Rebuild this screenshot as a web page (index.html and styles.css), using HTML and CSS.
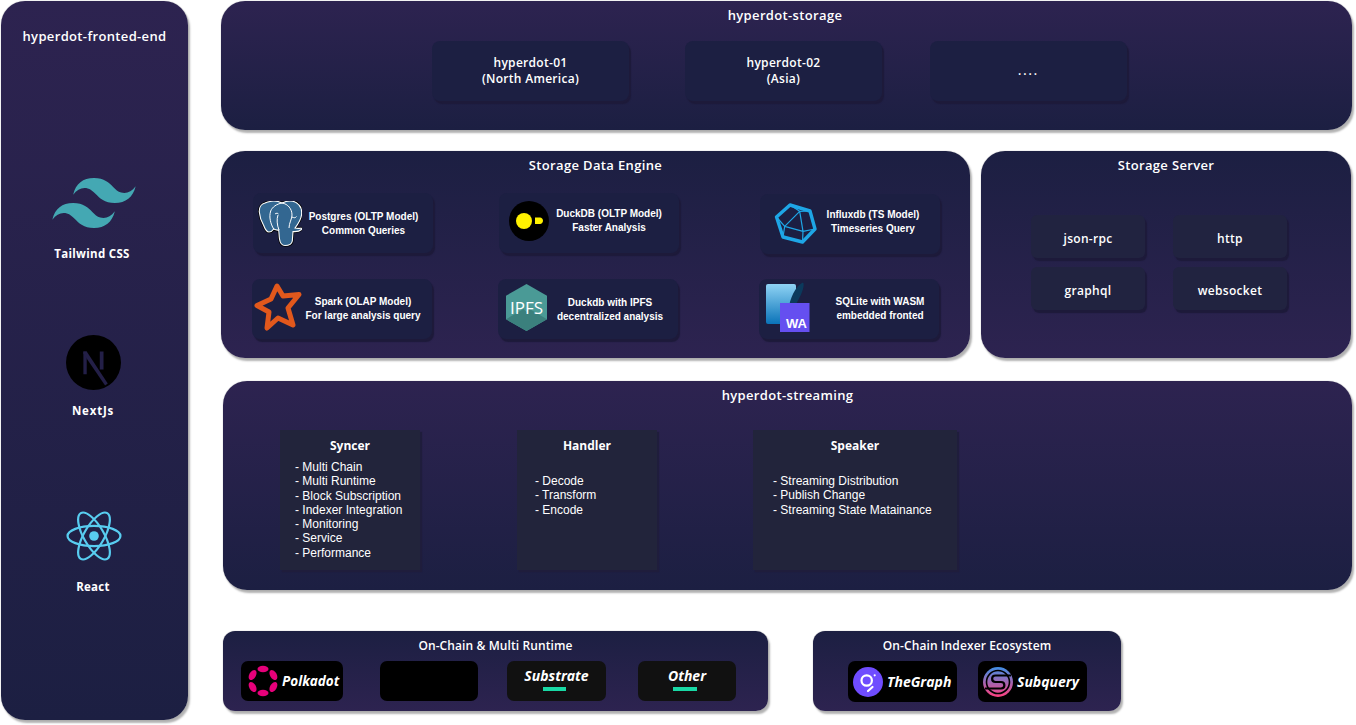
FILE: index.html
```html
<!DOCTYPE html>
<html lang="en">
<head>
<meta charset="utf-8">
<title>hyperdot architecture</title>
<link rel="stylesheet" href="styles.css">
</head>
<body>
<div class="page">
  <aside class="panel sidebar grad-down">
    <h2 class="title side-title">hyperdot-fronted-end</h2>
    <svg class="logo-tailwind" viewBox="0 4.8 24 14.4"><path fill="#44a8b3" d="M12.001 4.8c-3.2 0-5.2 1.6-6 4.8 1.2-1.6 2.6-2.2 4.2-1.8.913.228 1.565.89 2.288 1.624C13.666 10.618 15.027 12 18.001 12c3.2 0 5.2-1.6 6-4.8-1.2 1.6-2.6 2.2-4.2 1.8-.913-.228-1.565-.89-2.288-1.624C16.337 6.182 14.976 4.8 12.001 4.8zm-6 7.2c-3.2 0-5.2 1.6-6 4.8 1.2-1.6 2.6-2.2 4.2-1.8.913.228 1.565.89 2.288 1.624 1.177 1.194 2.538 2.576 5.512 2.576 3.2 0 5.2-1.6 6-4.8-1.2 1.6-2.6 2.2-4.2 1.8-.913-.228-1.565-.89-2.288-1.624C10.337 13.382 8.976 12 6.001 12z"/></svg>
    <div class="side-label label-tailwind">Tailwind CSS</div>
    <svg class="logo-next" viewBox="0 0 56 56"><circle cx="28" cy="28" r="28" fill="#000"/><path fill="#231f47" d="M17.700 16.700h3.400V40h-3.400zM34.400 16.700h3.800V35h-3.800z"/><path fill="#231f47" d="M17.700 16.700h3.400l21.400 32.800-2.700 2L17.700 19z"/></svg>
    <div class="side-label label-next">NextJs</div>
    <svg class="logo-react" viewBox="-29 -26 58 52"><g fill="none" stroke="#58cdf0" stroke-width="2.300"><ellipse rx="27.500" ry="10.500"/><ellipse rx="27.500" ry="10.500" transform="rotate(60)"/><ellipse rx="27.500" ry="10.500" transform="rotate(120)"/></g><circle r="5" fill="#58cdf0"/></svg>
    <div class="side-label label-react">React</div>
  </aside>

  <main class="main">
    <section class="panel storage grad-down">
      <h2 class="title storage-title">hyperdot-storage</h2>
      <div class="storage-grid">
        <div class="card node">hyperdot-01<br>(North America)</div>
        <div class="card node">hyperdot-02<br>(Asia)</div>
        <div class="card node node-more">....</div>
      </div>
    </section>

    <div class="middle">
      <section class="panel engine grad-up">
        <h2 class="title">Storage Data Engine</h2>
        <div class="engine-grid">
          <div class="card eng pg">
            <svg class="ico ico-pg" viewBox="0 0 44 46"><path fill="#336791" stroke="#000" stroke-width="2.600" d="M7 2C3 3 1 7 1.300 11c.4 5 2.400 10 4.400 13.500 1.500 4 3.500 6.500 5.300 6.500 2 0 3.700-1.500 4.700-3 1.500.8 3.300 1.300 5 1 .4 3 .3 6 .8 9 .6 4 2.500 6.500 5.500 6.500 4 0 6.800-1.500 7.300-4.500l.7-9.500c3 .3 6 .2 8.500-2 .8-.8.200-1.500-1-1.300-2 .3-4 .2-5.500-.2 3-4 6-8.500 6.500-13 .5-4.500-.5-8-2.500-10C39 1.500 36 0 32 0c-3 0-5.500.8-8 2-2.500-1.300-5.500-2-8.300-2C13 0 10 1 7 2z"/><path fill="#336791" stroke="#fff" stroke-width="1.100" d="M7 2C3 3 1 7 1.300 11c.4 5 2.400 10 4.400 13.500 1.500 4 3.500 6.500 5.300 6.500 2 0 3.700-1.500 4.700-3 1.500.8 3.300 1.300 5 1 .4 3 .3 6 .8 9 .6 4 2.500 6.500 5.500 6.500 4 0 6.800-1.500 7.300-4.500l.7-9.500c3 .3 6 .2 8.500-2 .8-.8.200-1.500-1-1.300-2 .3-4 .2-5.500-.2 3-4 6-8.500 6.500-13 .5-4.500-.5-8-2.500-10C39 1.500 36 0 32 0c-3 0-5.500.8-8 2-2.500-1.300-5.500-2-8.300-2C13 0 10 1 7 2z"/><path fill="none" stroke="#fff" stroke-width="1" d="M24 2c6 1 10 6 10 12 0 4-3 8-3 13M15.700 28c-3-5-5-12-3-18 1.500-4 6-7 11.300-8M21 29c-2-5-2.500-11-1-15M34 16c2 1 3.500 1 4.500-.5M17 13c1-1 3-1 3.500 0"/></svg>
            <div class="eng-text">Postgres (OLTP Model)<br>Common Queries</div>
          </div>
          <div class="card eng duck">
            <svg class="ico ico-duck" viewBox="0 0 40 40"><circle cx="20" cy="20" r="20" fill="#000"/><circle cx="15" cy="20" r="8" fill="#fff100"/><path fill="#fff100" d="M26 16.500h5c1.600 0 3 1.500 3 3.200s-1.400 3.300-3 3.300h-5z"/></svg>
            <div class="eng-text">DuckDB (OLTP Model)<br>Faster Analysis</div>
          </div>
          <div class="card eng influx">
            <svg class="ico ico-influx" viewBox="0 0 44 44"><g fill="none" stroke="#1ea6e6" stroke-linejoin="round"><path stroke-width="3.400" d="M17 3 37 9l5 18-12.500 13L10 35 3.500 15z"/><path stroke-width="1.200" d="M17 3l9.700 6.300L37 9M26.700 9.300 30 29.300M26.700 9.300 11.700 24.300M30 29.300 42 27M30 29.300 29.500 40M30 29.300 11.700 24.300 3.500 15M11.700 24.300 10 35"/></g></svg>
            <div class="eng-text">Influxdb (TS Model)<br>Timeseries Query</div>
          </div>
          <div class="card eng spark">
            <svg class="ico ico-spark" viewBox="0 0 48 50"><path fill="none" stroke="#e2581c" stroke-width="5" stroke-linejoin="round" d="M23 4 29 14 45 12.500 34 26 39 43 24 36 13 46 15 30 3 23.500 17 17z"/></svg>
            <div class="eng-text">Spark (OLAP Model)<br>For large analysis query</div>
          </div>
          <div class="card eng ipfs">
            <svg class="ico ico-ipfs" viewBox="0 0 41 47"><path fill="#4a9a96" d="M20.500 0 41 11.700v23.600L20.500 47 0 35.300V11.700z"/><path fill="#3b807d" d="M0 35.300 20.500 47V28l-3-3zM41 35.300 20.500 47V28l3-3z"/><text class="ipfs-text" x="20.500" y="29.500" text-anchor="middle">IPFS</text></svg>
            <div class="eng-text">Duckdb with IPFS<br>decentralized analysis</div>
          </div>
          <div class="card eng sqlite">
            <svg class="ico ico-sqlite" viewBox="0 0 45 51"><defs><linearGradient id="sq" x1="0" y1="0" x2="0" y2="1"><stop offset="0" stop-color="#8fd3f4"/><stop offset="1" stop-color="#0a73b8"/></linearGradient></defs><rect x="1" y="3" width="30" height="40" rx="2" fill="url(#sq)"/><path fill="#0b3a5c" d="M24 26c1-8 6-20 13-24 2-1 2 2 1 6-2 7-6 13-12 24l-2 1z"/><rect x="15" y="22" width="29.500" height="29" fill="#654ff0"/><text class="wa-text" x="31.500" y="46.500" text-anchor="middle">WA</text></svg>
            <div class="eng-text">SQLite with WASM<br>embedded fronted</div>
          </div>
        </div>
      </section>

      <section class="panel server grad-up">
        <h2 class="title">Storage Server</h2>
        <div class="server-grid">
          <div class="card rpc">json-rpc</div>
          <div class="card rpc">http</div>
          <div class="card rpc">graphql</div>
          <div class="card rpc">websocket</div>
        </div>
      </section>
    </div>

    <section class="panel streaming grad-down">
      <h2 class="title">hyperdot-streaming</h2>
      <div class="stream-row">
        <div class="block syncer">
          <h3 class="block-title">Syncer</h3>
          <ul class="list list-syncer">
            <li>- Multi Chain</li><li>- Multi Runtime</li><li>- Block Subscription</li><li>- Indexer Integration</li><li>- Monitoring</li><li>- Service</li><li>- Performance</li>
          </ul>
        </div>
        <div class="block handler">
          <h3 class="block-title">Handler</h3>
          <ul class="list list-handler">
            <li>- Decode</li><li>- Transform</li><li>- Encode</li>
          </ul>
        </div>
        <div class="block speaker">
          <h3 class="block-title">Speaker</h3>
          <ul class="list list-speaker">
            <li>- Streaming Distribution</li><li>- Publish Change</li><li>- Streaming State Matainance</li>
          </ul>
        </div>
      </div>
    </section>

    <div class="bottom">
      <section class="panel chain grad-up">
        <h2 class="title small">On-Chain &amp; Multi Runtime</h2>
        <div class="chain-row">
          <div class="tile tile-polkadot">
            <svg class="tile-ico dot-ico" viewBox="0 0 30 32"><g fill="#e6007a"><ellipse cx="15" cy="4" rx="5.500" ry="3.300"/><ellipse cx="15" cy="28" rx="5.500" ry="3.300"/><ellipse cx="4.600" cy="10" rx="5.500" ry="3.300" transform="rotate(-60 4.600 10)"/><ellipse cx="25.400" cy="10" rx="5.500" ry="3.300" transform="rotate(60 25.400 10)"/><ellipse cx="4.600" cy="22" rx="5.500" ry="3.300" transform="rotate(60 4.600 22)"/><ellipse cx="25.400" cy="22" rx="5.500" ry="3.300" transform="rotate(-60 25.400 22)"/></g></svg>
            <span class="tile-name">Polkadot</span>
          </div>
          <div class="tile tile-blank"></div>
          <div class="tile tile-stack tile-substrate"><span class="tile-name">Substrate</span><span class="bar bar-substrate"></span></div>
          <div class="tile tile-stack tile-other"><span class="tile-name">Other</span><span class="bar bar-other"></span></div>
        </div>
      </section>
      <section class="panel indexer grad-up">
        <h2 class="title small">On-Chain Indexer Ecosystem</h2>
        <div class="indexer-row">
          <div class="tile tile-index">
            <svg class="tile-ico idx-ico" viewBox="0 0 30 30"><circle cx="15" cy="15" r="15" fill="#6f4cff"/><circle cx="13.700" cy="13.500" r="5.200" fill="none" stroke="#fff" stroke-width="2.200"/><path stroke="#fff" stroke-width="2.200" stroke-linecap="round" d="M15 24l4.500-4"/><circle cx="21.700" cy="8.300" r="1.100" fill="#fff"/></svg>
            <span class="tile-name">TheGraph</span>
          </div>
          <div class="tile tile-index">
            <svg class="tile-ico idx-ico" viewBox="0 0 30 30"><defs><linearGradient id="sub" x1="0" y1="0" x2="0" y2="1"><stop offset="0" stop-color="#3f8fe6"/><stop offset="1" stop-color="#ff3f7f"/></linearGradient></defs><circle cx="15" cy="15" r="15" fill="url(#sub)"/><circle cx="15" cy="15" r="11.500" fill="none" stroke="#000" stroke-width="1.600"/><path fill="none" stroke="#000" stroke-width="2.200" d="M28 8.500H12.500c-4.500 0-4.500 6.500 0 6.500h5.500c4.500 0 4.500 6.500 0 6.500H2"/></svg>
            <span class="tile-name">Subquery</span>
          </div>
        </div>
      </section>
    </div>
  </main>
</div>
</body>
</html>
```

FILE: styles.css
```css
* { box-sizing: border-box; }
html, body { margin: 0; padding: 0; background: #fff; }
body { width: 1356px; height: 725px; overflow: hidden; font-family: "Open Sans", "Noto Sans", sans-serif; color: #fff; }
h2, h3, ul { margin: 0; padding: 0; }
ul { list-style: none; }

.page { display: flex; align-items: flex-start; padding: 1px 0 0 1px; gap: 33px; }
.main { display: flex; flex-direction: column; width: 1131px; }

.panel { border-radius: 24px; box-shadow: 0 0 1px #888, 2px 3px 2px rgba(0,0,0,.3); }
.grad-down { background: linear-gradient(180deg, #2d2350, #1c1f42); }
.grad-up { background: linear-gradient(180deg, #1c1f42, #2d2350); }

.title { font-size: 13px; font-weight: 600; line-height: 18px; text-align: center; letter-spacing: .35px; }
.title.small { font-size: 12px; line-height: 16px; letter-spacing: .1px; }
.storage-title { padding-right: 3px; }

.sidebar { width: 187px; height: 719px; display: flex; flex-direction: column; align-items: center; }
.side-title { margin-top: 26px; font-size: 13px; }
.logo-tailwind { width: 84px; height: 50px; margin-top: 133px; margin-left: -1px; flex: none; }
.side-label { font-size: 11.500px; font-weight: 700; line-height: 16px; letter-spacing: .3px; }
.label-tailwind { margin-top: 18px; margin-left: -5px; }
.logo-next { width: 55px; height: 55px; margin-top: 73px; margin-left: -2px; flex: none; }
.label-next { margin-top: 13px; margin-left: -3px; letter-spacing: .8px; }
.logo-react { width: 56px; height: 50px; margin-top: 92px; margin-left: -2px; flex: none; }
.label-react { margin-top: 18px; margin-left: -3px; }

.card { background: #1c1f42; border-radius: 8px; box-shadow: 2px 3px 1px #1d1a3a; }

.storage { height: 129px; padding-top: 5px; }
.storage-grid { display: grid; grid-template-columns: 253px 245px 197px; margin: 17px 0 0 211px; }
.node { width: 197px; height: 60px; display: flex; align-items: center; justify-content: center; text-align: center; font-size: 12px; font-weight: 600; line-height: 16px; letter-spacing: .3px; }
.node-more { letter-spacing: 2px; }

.middle { display: flex; gap: 11px; margin-top: 21px; }
.engine { width: 749px; height: 207px; padding-top: 5px; }
.server { width: 370px; height: 207px; padding-top: 5px; }
.engine-grid { display: grid; grid-template-columns: 246px 261px 181px; grid-template-rows: 87px 61px; margin: 19px 0 0 32px; }
.eng { display: flex; align-items: center; height: 60px; width: 180px; }
.eng-text { flex: 1; text-align: center; font-family: "Liberation Sans", Arial, sans-serif; font-size: 10px; font-weight: 700; line-height: 14px; white-space: nowrap; }
.ico { flex: none; display: block; }
.ico-pg { width: 44px; height: 46px; margin: 2px -2px 0 5px; }
.eng.pg { padding-right: 6px; }
.pg .eng-text { margin-top: 2px; }
.ico-duck { width: 40px; height: 40px; margin: -4px 0 0 10px; }
.duck .eng-text { margin-top: -4px; padding-right: 10px; }
.influx { margin-top: 1px; }
.ico-influx { width: 44px; height: 44px; margin-left: 13px; }
.influx .eng-text { margin-top: -4px; padding-right: 11px; }
.spark, .ipfs, .sqlite { margin: -1px 0 0 -1px; }
.ico-spark { width: 48px; height: 50px; margin: -4px 0 0 2px; }
.ico-ipfs { width: 41px; height: 47px; margin: -3px 0 0 8px; }
.ipfs .eng-text { padding-right: 5px; margin-top: 2px; }
.ico-sqlite { width: 45px; height: 51px; margin: -5px 0 0 6px; }
.sqlite .eng-text { padding-left: 11px; }
.spark .eng-text { padding-right: 8px; }
.ipfs-text { font-family: "Open Sans", sans-serif; font-size: 17px; fill: #fff; }
.wa-text { font-family: "Liberation Sans", Arial, sans-serif; font-size: 13px; font-weight: 700; fill: #fff; }

.server-grid { display: grid; grid-template-columns: 142px 114px; grid-template-rows: 52px 42px; margin: 41px 0 0 50px; }
.rpc { width: 114px; height: 43px; padding-top: 3px; display: flex; align-items: center; justify-content: center; font-size: 12px; font-weight: 600; letter-spacing: .3px; border-radius: 6px; background: #212340; }

.streaming { width: 1129px; height: 209px; margin: 23px 0 0 2px; padding-top: 5px; }
.stream-row { display: flex; margin: 26px 0 0 57px; }
.block { height: 140px; background: #22243b; box-shadow: 2px 2px 1px #1f1d3c; }
.syncer { width: 140px; margin-right: 97px; }
.handler { width: 140px; margin-right: 96px; }
.speaker { width: 204px; }
.block-title { font-size: 12px; font-weight: 700; line-height: 16px; text-align: center; padding-top: 6px; margin-top: 2px; }
.list { font-family: "Liberation Sans", Arial, sans-serif; font-size: 12px; line-height: 14.300px; white-space: nowrap; }
.list-syncer { margin: 6px 0 0 15px; }
.list-handler { margin: 20px 0 0 18px; }
.list-speaker { margin: 20px 0 0 20px; }

.bottom { display: flex; gap: 45px; margin: 41px 0 0 2px; }
.chain { width: 545px; height: 80px; padding-top: 7px; }
.indexer { width: 308px; height: 80px; padding-top: 7px; }
.panel.chain, .panel.indexer { border-radius: 12px; }
.chain-row { display: flex; margin: 7px 0 0 18px; }
.tile { height: 40px; background: #000; border-radius: 7px; display: flex; align-items: center; flex: none; }
.tile-name { font-size: 14px; font-weight: 700; font-style: italic; color: #fff; line-height: 18px; white-space: nowrap; }
.tile-ico { flex: none; display: block; }
.tile-polkadot { width: 102px; margin-right: 37px; padding-left: 7px; gap: 4px; }
.tile-polkadot .tile-name { font-size: 13.500px; }
.dot-ico { width: 30px; height: 32px; }
.tile-blank { width: 98px; margin-right: 29px; }
.tile-stack { flex-direction: column; background: #111; }
.tile-stack .tile-name { margin-top: 6px; }
.tile-substrate { width: 99px; margin-right: 32px; }
.tile-other { width: 98px; }
.bar { display: block; height: 4px; background: #19d9a5; margin: 2px 0 0 -4px; }
.bar-substrate { width: 23px; }
.bar-other { width: 24px; }
.indexer-row { display: flex; gap: 21px; margin: 7px 0 0 35px; }
.tile-index { width: 109px; height: 41px; padding-left: 5px; gap: 4px; }
.idx-ico { width: 30px; height: 30px; }
```
